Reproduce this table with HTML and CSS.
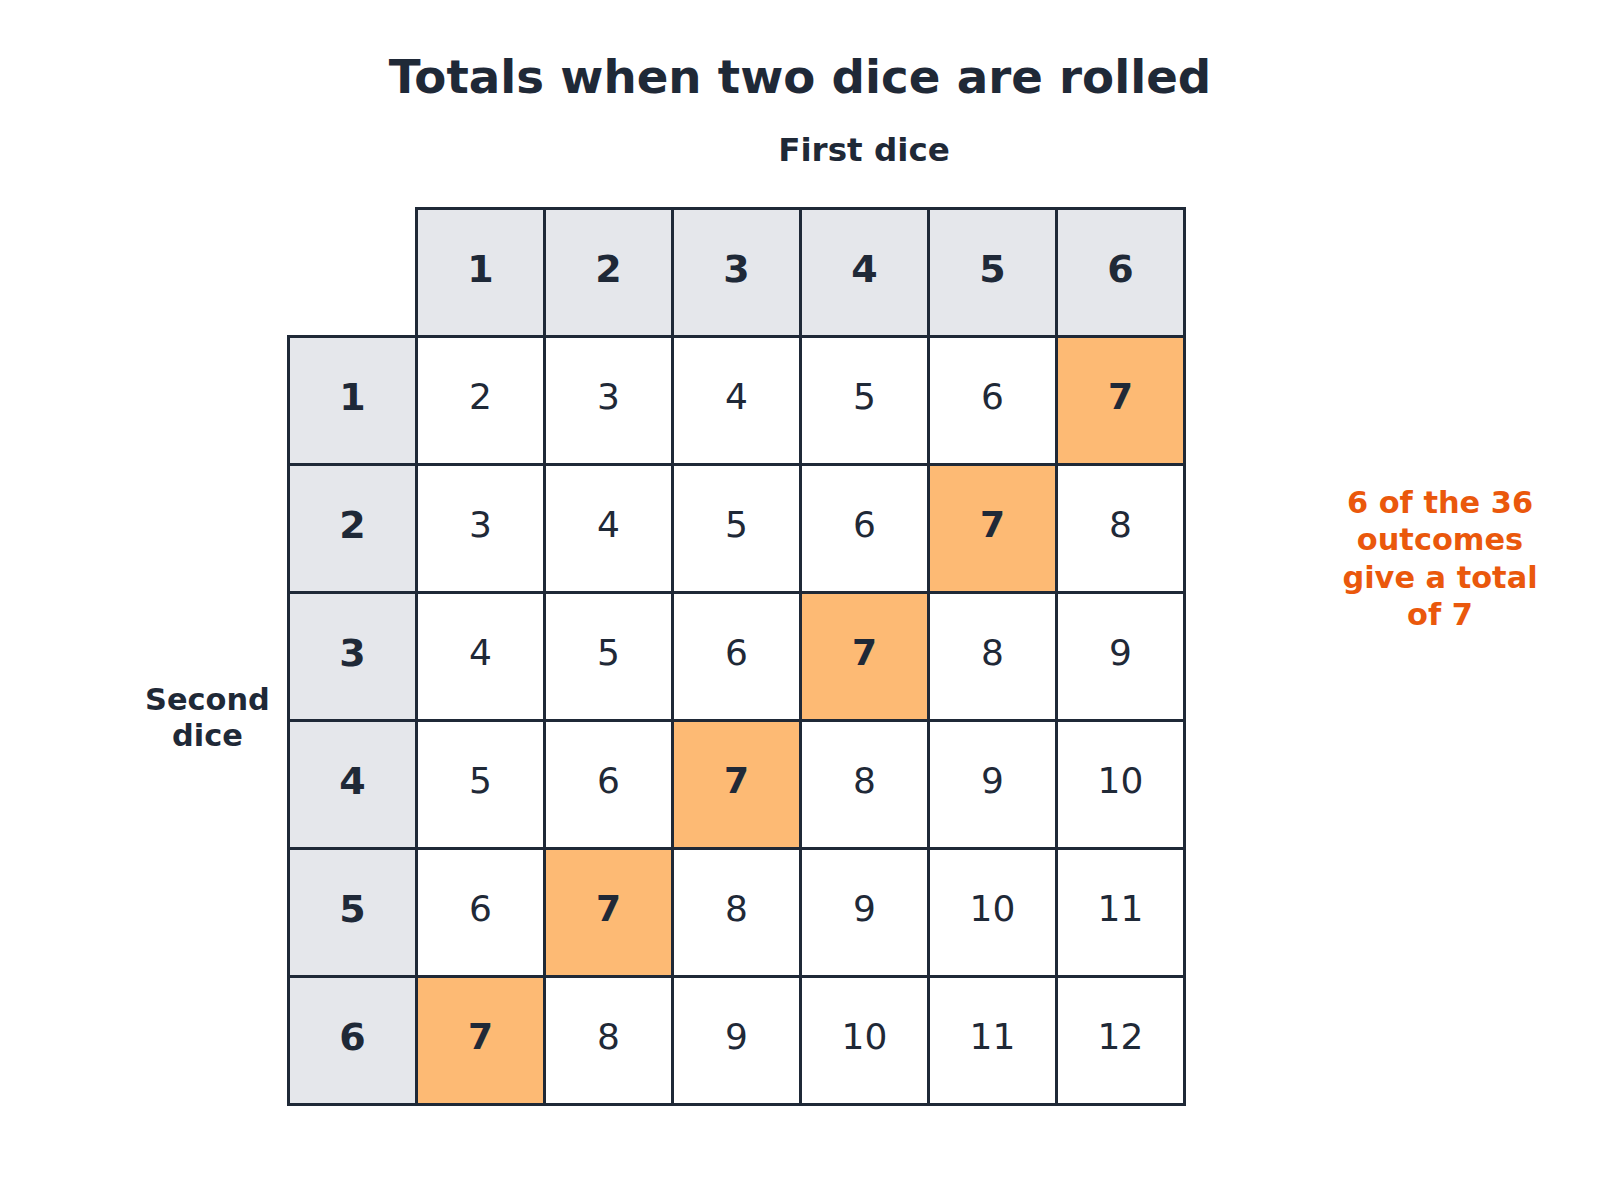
FILE: index.html
```html
<!DOCTYPE html>
<html lang="en">
<head>
<meta charset="utf-8">
<title>Totals when two dice are rolled</title>
<link rel="stylesheet" href="styles.css">
</head>
<body>
<div class="page">
  <h1 class="title">Totals when two dice are rolled</h1>
  <div class="axis-top"><span>First dice</span></div>
  <div class="main">
    <div class="side-label">Second<br>dice</div>
    <div class="grid">
      <div class="corner"></div>
      <div class="cell head">1</div>
      <div class="cell head">2</div>
      <div class="cell head">3</div>
      <div class="cell head">4</div>
      <div class="cell head">5</div>
      <div class="cell head">6</div>

      <div class="cell head">1</div>
      <div class="cell">2</div><div class="cell">3</div><div class="cell">4</div><div class="cell">5</div><div class="cell">6</div><div class="cell hit">7</div>

      <div class="cell head">2</div>
      <div class="cell">3</div><div class="cell">4</div><div class="cell">5</div><div class="cell">6</div><div class="cell hit">7</div><div class="cell">8</div>

      <div class="cell head">3</div>
      <div class="cell">4</div><div class="cell">5</div><div class="cell">6</div><div class="cell hit">7</div><div class="cell">8</div><div class="cell">9</div>

      <div class="cell head">4</div>
      <div class="cell">5</div><div class="cell">6</div><div class="cell hit">7</div><div class="cell">8</div><div class="cell">9</div><div class="cell">10</div>

      <div class="cell head">5</div>
      <div class="cell">6</div><div class="cell hit">7</div><div class="cell">8</div><div class="cell">9</div><div class="cell">10</div><div class="cell">11</div>

      <div class="cell head">6</div>
      <div class="cell hit">7</div><div class="cell">8</div><div class="cell">9</div><div class="cell">10</div><div class="cell">11</div><div class="cell">12</div>
    </div>
    <div class="note">6 of the 36 outcomes give a total of 7</div>
  </div>
</div>
</body>
</html>
```

FILE: styles.css
```css
html, body {
  margin: 0;
  padding: 0;
  background: #ffffff;
}

body {
  font-family: "DejaVu Sans", "Liberation Sans", sans-serif;
  color: #1f2937;
}

.page {
  width: 1600px;
  height: 1200px;
  padding-top: 49px;
  box-sizing: border-box;
}

.title {
  margin: 0;
  font-size: 46.7px;
  line-height: 56px;
  font-weight: bold;
  text-align: center;
}

.axis-top {
  margin-top: 27px;
  padding-left: 128px;
  font-size: 32.6px;
  line-height: 36px;
  font-weight: bold;
  text-align: center;
}

.main {
  display: flex;
  align-items: flex-start;
  margin-top: 39px;
}

.side-label {
  width: 159px;
  margin-left: 128px;
  align-self: stretch;
  display: flex;
  align-items: center;
  justify-content: center;
  padding-top: 128px;
  padding-bottom: 6px;
  box-sizing: border-box;
  font-size: 30.4px;
  line-height: 36px;
  font-weight: bold;
  text-align: center;
}

.grid {
  display: grid;
  grid-template-columns: repeat(7, 128px);
  grid-template-rows: repeat(7, 128px);
  padding: 0 3px 3px 0;
}

.cell {
  margin: 0 -3px -3px 0;
  border: 3px solid #1f2937;
  background: #ffffff;
  display: flex;
  align-items: center;
  justify-content: center;
  padding-bottom: 7px;
  box-sizing: border-box;
  font-size: 36px;
  line-height: 40px;
}

.cell.head {
  background: #e5e7eb;
  font-weight: bold;
  font-size: 38px;
}

.cell.hit {
  background: #fdba74;
  font-weight: bold;
}

.note {
  width: 220px;
  margin-left: 144px;
  margin-top: 277px;
  font-size: 30.4px;
  line-height: 37.4px;
  font-weight: bold;
  text-align: center;
  color: #ea580c;
}
```
